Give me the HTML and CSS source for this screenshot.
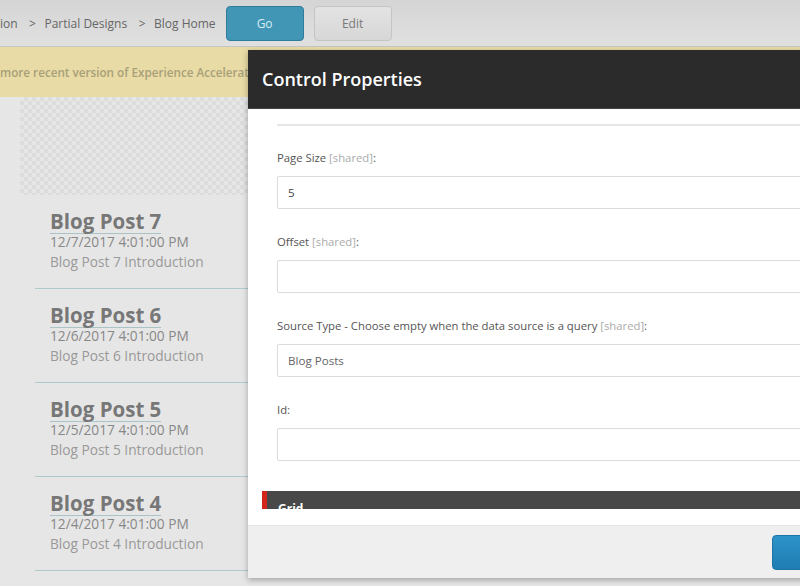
FILE: index.html
```html
<!DOCTYPE html>
<html lang="en">
  <head>
    <meta charset="UTF-8">
    <title>Blog Home - Control Properties</title>
    <link rel="stylesheet" href="styles.css">
  </head>
  <body>

    <div class="topbar">
      <span class="crumb">ion</span>
      <span class="sep">&gt;</span>
      <span class="crumb">Partial Designs</span>
      <span class="sep">&gt;</span>
      <span class="crumb">Blog Home</span>
      <button class="btn go">Go</button>
      <button class="btn edit">Edit</button>
    </div>

    <div class="notice">
      <span class="notice-text">more recent version of Experience Accelerator is available</span>
    </div>

    <div class="page">
      <div class="placeholder"></div>

      <div class="posts">
        <div class="post">
          <a class="post-title">Blog Post 7</a>
          <div class="post-date">12/7/2017 4:01:00 PM</div>
          <div class="post-intro">Blog Post 7 Introduction</div>
        </div>
        <div class="post">
          <a class="post-title">Blog Post 6</a>
          <div class="post-date">12/6/2017 4:01:00 PM</div>
          <div class="post-intro">Blog Post 6 Introduction</div>
        </div>
        <div class="post">
          <a class="post-title">Blog Post 5</a>
          <div class="post-date">12/5/2017 4:01:00 PM</div>
          <div class="post-intro">Blog Post 5 Introduction</div>
        </div>
        <div class="post">
          <a class="post-title">Blog Post 4</a>
          <div class="post-date">12/4/2017 4:01:00 PM</div>
          <div class="post-intro">Blog Post 4 Introduction</div>
        </div>
      </div>
    </div>

    <!-- dialog -->
    <div class="dialog">
      <div class="dialog-head">Control Properties</div>

      <div class="dialog-body">
        <div class="scroller">
          <div class="divider"></div>

          <div class="field">
            <label>Page Size <span class="shared">[shared]</span>:</label>
            <div class="input">5</div>
          </div>

          <div class="field">
            <label>Offset <span class="shared">[shared]</span>:</label>
            <div class="input"></div>
          </div>

          <div class="field">
            <label>Source Type - Choose empty when the data source is a query <span class="shared">[shared]</span>:</label>
            <div class="input muted">Blog Posts</div>
          </div>

          <div class="field">
            <label>Id:</label>
            <div class="input"></div>
          </div>

          <div class="section">Grid</div>
        </div>
      </div>

      <div class="dialog-foot">
        <button class="btn ok">OK</button>
      </div>
    </div>

  </body>
</html>
```

FILE: styles.css
```css
html, body {
  margin: 0;
  height: 586px;
  overflow: hidden;
}

body {
  background: #e6e6e6;
  font-family: "Open Sans", "Noto Sans", sans-serif;
  position: relative;
}

.topbar {
  height: 46px;
  border-bottom: 1px solid #c6c6c6;
  background: linear-gradient(#d5d5d5, #e0e0e0);
  display: flex;
  align-items: center;
  font-size: 12px;
  color: #666;
  white-space: nowrap;
}
.sep {
  margin: 0 8.5px 0 11.5px;
}

.btn {
  font-family: "Open Sans", "Noto Sans", sans-serif;
  font-size: 12px;
  height: 35px;
  width: 78px;
  border-radius: 4px;
  cursor: pointer;
}
.go {
  margin-left: 10px;
  background: #4196b6;
  border: 1px solid #2f7d9b;
  color: #d9edf4;
}
.edit {
  margin-left: 10px;
  background: linear-gradient(#e3e3e3, #d7d7d7);
  border: 1px solid #c4c4c4;
  color: #7a7a7a;
}

.notice {
  height: 50px;
  line-height: 50px;
  background: #e8dba6;
  color: #a8a078;
  font-size: 11.7px;
  font-weight: 600;
  white-space: nowrap;
}
.notice-text {
  display: block;
  width: 248px;
  overflow: hidden;
}

.placeholder {
  margin-left: 20px;
  height: 98px;
  background-color: #e4e4e4;
  background-image: repeating-conic-gradient(#dcdcdc 0 25%, #e6e6e6 0 50%);
  background-size: 8px 8px;
}

.posts {
  margin-left: 35px;
}
.post {
  height: 93px;
  padding-left: 15px;
  border-bottom: 1px solid #afcacd;
}
.post-title {
  display: inline-block;
  margin-top: 15px;
  font-size: 20.5px;
  line-height: 23px;
  font-weight: 700;
  color: #777;
  border-bottom: 1px solid #a9c3c7;
}
.post-date {
  font-size: 13.7px;
  line-height: 16px;
  color: #888;
}
.post-intro {
  margin-top: 3px;
  font-size: 13.7px;
  line-height: 18px;
  color: #999;
}

/* dialog */
.dialog {
  position: absolute;
  left: 248px;
  top: 50px;
  width: 628px;
  height: 528px;
  background: #fff;
  box-shadow: 0 2px 6px rgba(0, 0, 0, 0.3);
  display: flex;
  flex-direction: column;
}
.dialog-head {
  height: 58px;
  line-height: 58px;
  background: #2b2b2b;
  border-bottom: 1px solid #444;
  padding-left: 14px;
  color: #fff;
  font-size: 18px;
  font-weight: 600;
}
.dialog-body {
  padding: 0 14px 16px;
}
.scroller {
  height: 400px;
  overflow: hidden;
}
.divider {
  margin: 15px 0 0 15px;
  height: 2px;
  background: #e6e6e6;
}
.field {
  padding: 24px 15px 0;
}
.field + .field {
  padding-top: 25px;
}
.field label {
  display: block;
  font-size: 11.3px;
  line-height: 16px;
  color: #555;
  margin-bottom: 10px;
}
.shared {
  color: #aaa;
}
.input {
  height: 31px;
  line-height: 31px;
  border: 1px solid #dcdcdc;
  border-radius: 2px;
  padding-left: 10px;
  font-size: 11.6px;
  color: #444;
}
.input.muted {
  color: #666;
}
.section {
  margin-top: 30px;
  height: 30px;
  background: #484848;
  border-left: 5px solid #d4251c;
  padding-left: 11px;
  color: #fff;
  font-size: 12px;
  font-weight: 700;
  line-height: 36px;
}

.dialog-foot {
  flex: 1;
  background: #efefef;
  border-top: 1px solid #e4e4e4;
  display: flex;
  justify-content: flex-end;
  align-items: center;
  padding-right: 14px;
}
.ok {
  width: 90px;
  background: linear-gradient(#2c93c9, #1f7db2);
  border: 1px solid #1c74a6;
  color: #fff;
}
```
